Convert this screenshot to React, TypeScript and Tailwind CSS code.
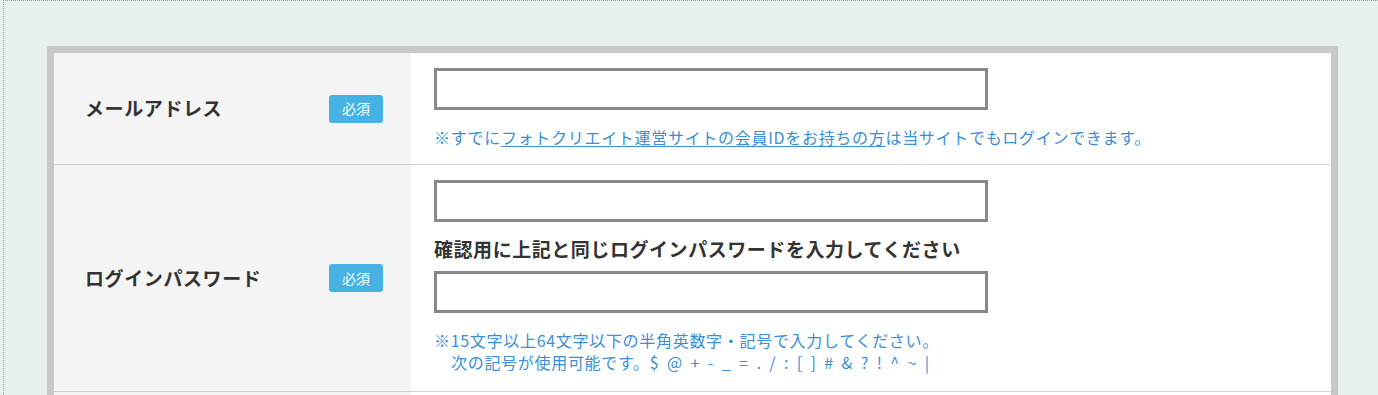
const font = { fontFamily: '"Noto Sans CJK JP", "Noto Sans", sans-serif' };

const RequiredBadge = () => (
  <span className="flex h-[28px] w-[54px] items-center justify-center rounded-[3px] bg-[#46b2e3] text-[14px] text-white">
    必須
  </span>
);

const TextInput = () => <div className="h-[42px] w-[554px] border-[3px] border-[#888888] bg-white" />;

const FieldLabel = ({ label }: { label: string }) => (
  <div className="flex items-center justify-between bg-[#f4f4f4] pl-[31px] pr-[28px]">
    <span className="text-[19px] font-bold tracking-[0.6px] text-[#333333]">{label}</span>
    <RequiredBadge />
  </div>
);

export default function App() {
  return (
    <div className="h-[395px] overflow-hidden bg-[#e8eff1]" style={font}>
      <div className="ml-[3px] h-full border-l border-t border-dotted border-[#9a9a9a] pl-[43px] pr-[40px] pt-[45px]">
        <div className="border-x-[7px] border-t-[7px] border-[#c8c8c8]">
          {/* メールアドレス */}
          <div className="grid grid-cols-[357px_1fr] border-b border-[#d3d3d3]">
            <FieldLabel label="メールアドレス" />
            <div className="bg-white pb-[16px] pl-[23px] pt-[15px]">
              <TextInput />
              <p className="mt-[16px] text-[16px] leading-[22px] tracking-[0.7px] text-[#3b8ed4]">
                ※すでに<span className="underline underline-offset-2">フォトクリエイト運営サイトの会員IDをお持ちの方</span>
                は当サイトでもログインできます。
              </p>
            </div>
          </div>

          {/* ログインパスワード */}
          <div className="grid grid-cols-[357px_1fr] border-b border-[#d3d3d3]">
            <FieldLabel label="ログインパスワード" />
            <div className="bg-white pb-[18px] pl-[23px] pt-[15px]">
              <TextInput />
              <p className="mt-[13px] mb-[8px] text-[19px] font-bold leading-[28px] tracking-[0.55px] text-[#333333]">
                確認用に上記と同じログインパスワードを入力してください
              </p>
              <TextInput />
              <div className="mt-[16px] text-[16px] leading-[22px] tracking-[0.7px] text-[#3b8ed4]">
                <p>※15文字以上64文字以下の半角英数字・記号で入力してください。</p>
                <p className="pl-[17px]">
                  次の記号が使用可能です。
                  <span className="tracking-[2.4px]">$ @ + - _ = . / : [ ] # &amp; ? ! ^ ~ |</span>
                </p>
              </div>
            </div>
          </div>

          <div className="grid h-[80px] grid-cols-[357px_1fr]">
            <div className="bg-[#f4f4f4]" />
            <div className="bg-white" />
          </div>
        </div>
      </div>
    </div>
  );
}
